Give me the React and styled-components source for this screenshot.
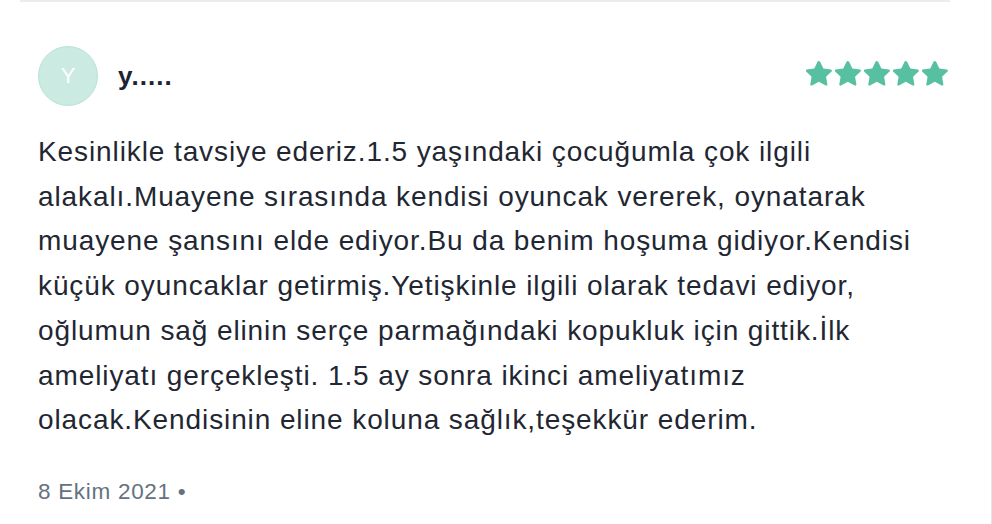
import React from 'react'
import styled, { createGlobalStyle } from 'styled-components'

const GlobalStyle = createGlobalStyle`
  html, body {
    margin: 0;
    padding: 0;
    background: #fff;
  }
  body {
    font-family: "Liberation Sans", Arial, sans-serif;
    -webkit-font-smoothing: antialiased;
  }
`

const Page = styled.div`
  width: 991px;
  height: 524px;
  border-right: 1px solid #e4e4e7;
  overflow: hidden;
`

const Review = styled.article`
  margin: 0 41px 0 20px;
  border-top: 2px solid #ebebf0;
  padding: 44px 0 0 18px;
`

const Header = styled.div`
  display: flex;
  align-items: center;
  justify-content: space-between;
`

const Author = styled.div`
  display: flex;
  align-items: center;
  gap: 20px;
`

const Avatar = styled.div`
  width: 58px;
  height: 58px;
  border-radius: 50%;
  background: #cbebe2;
  border: 1px solid #b9e2d6;
  color: #fff;
  font-size: 22px;
  display: flex;
  align-items: center;
  justify-content: center;
`

const Name = styled.span`
  font-size: 26px;
  font-weight: 700;
  letter-spacing: 1px;
  color: #1c2331;
`

const Stars = styled.div`
  display: flex;
  gap: 1px;
  margin-top: -6px;
`

const Body = styled.p`
  margin: 24px 0 0;
  font-size: 28px;
  line-height: 44.7px;
  letter-spacing: 0.9px;
  color: #1f2733;
`

const Line = styled.span`
  display: block;
  white-space: nowrap;
`

const Meta = styled.div`
  margin-top: 36px;
  font-size: 22.5px;
  letter-spacing: 0.7px;
  color: #667180;
`

const Star = () => (
  <svg width="28" height="28" viewBox="0 0 24 24">
    <path
      d="M12 2.2l2.9 6 6.5.9c.8.1 1.1 1.1.5 1.6l-4.7 4.5 1.1 6.5c.1.8-.7 1.4-1.4 1l-5.9-3.1-5.9 3.1c-.7.4-1.5-.2-1.4-1l1.1-6.5-4.7-4.5c-.6-.5-.3-1.5.5-1.6l6.5-.9 2.9-6c.4-.7 1.4-.7 1.8 0z"
      fill="#57c0a1"
    />
  </svg>
)

const lines = [
  'Kesinlikle tavsiye ederiz.1.5 yaşındaki çocuğumla çok ilgili',
  'alakalı.Muayene sırasında kendisi oyuncak vererek, oynatarak',
  'muayene şansını elde ediyor.Bu da benim hoşuma gidiyor.Kendisi',
  'küçük oyuncaklar getirmiş.Yetişkinle ilgili olarak tedavi ediyor,',
  'oğlumun sağ elinin serçe parmağındaki kopukluk için gittik.İlk',
  'ameliyatı gerçekleşti. 1.5 ay sonra ikinci ameliyatımız',
  'olacak.Kendisinin eline koluna sağlık,teşekkür ederim.',
]

export default function App() {
  return (
    <Page>
      <GlobalStyle />
      <Review>
        <Header>
          <Author>
            <Avatar>Y</Avatar>
            <Name>y.....</Name>
          </Author>
          <Stars>
            {[0, 1, 2, 3, 4].map(i => <Star key={i} />)}
          </Stars>
        </Header>
        <Body lang="tr">
          {lines.map(l => <Line key={l}>{l}</Line>)}
        </Body>
        <Meta>8 Ekim 2021 •</Meta>
      </Review>
    </Page>
  )
}
